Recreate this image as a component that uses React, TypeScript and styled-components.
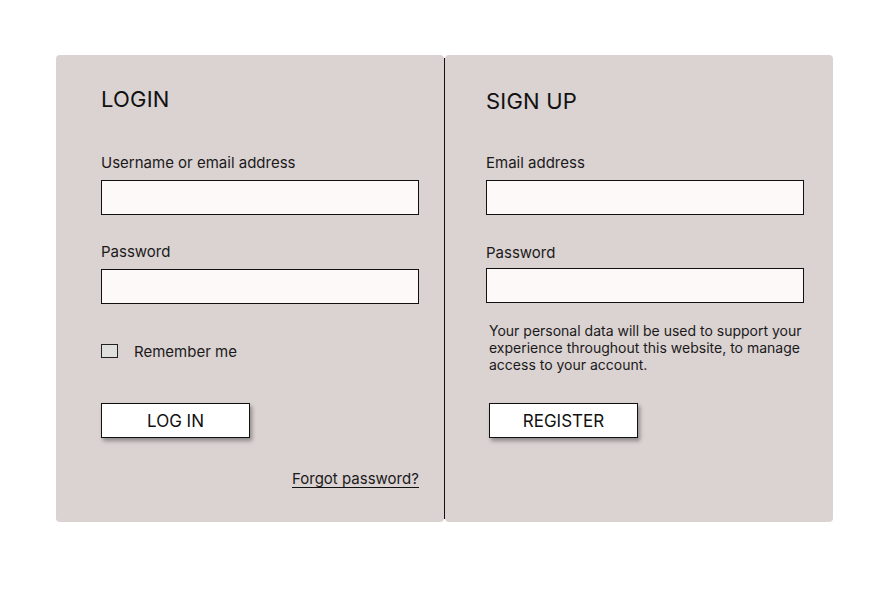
import React from "react";
import styled, { createGlobalStyle } from "styled-components";

const Global = createGlobalStyle`
  html, body { margin: 0; padding: 0; background: #ffffff; }
  body { font-family: Inter, "Noto Sans", sans-serif; color: #111; }
  * { box-sizing: border-box; }
`;

const Page = styled.div`
  padding: 55px 0 0 56px;
`;

const Board = styled.div`
  display: flex;
  width: 777px;
  height: 467px;
`;

const Panel = styled.section<{ $side: "left" | "right" }>`
  flex: 0 0 388px;
  min-width: 0;
  background: #dbd2d2;
  border-radius: 4px;
  padding: ${(p) => (p.$side === "left" ? "30px 25px 0 45px" : "32px 28px 0 41px")};
  display: flex;
  flex-direction: column;
`;

const Divider = styled.div`
  flex: 0 0 1px;
  background: #111;
  margin: 3px 0;
`;

const Title = styled.h2`
  margin: 0;
  font-size: 22px;
  font-weight: 400;
  line-height: 28px;
  letter-spacing: 0.2px;
`;

const Field = styled.div<{ $top: number }>`
  margin-top: ${(p) => p.$top}px;
  display: flex;
  flex-direction: column;
`;

const Label = styled.label<{ $gap?: number }>`
  font-size: 15px;
  line-height: 18px;
  margin-bottom: ${(p) => p.$gap ?? 8}px;
  color: #1a1a1a;
`;

const Input = styled.input`
  width: 318px;
  height: 35px;
  border: 1px solid #111;
  background: #fdf9f9;
  border-radius: 0;
  outline: none;
  padding: 0 8px;
  font: inherit;
`;

const CheckRow = styled.label`
  display: flex;
  align-items: center;
  gap: 16px;
  margin-top: 38px;
  font-size: 15px;
  color: #1a1a1a;
`;

const Box = styled.span`
  width: 17px;
  height: 14px;
  border: 1px solid #222;
  background: #dfe0dd;
  margin-top: -2px;
`;

const Button = styled.button<{ $top: number; $left?: number }>`
  margin-top: ${(p) => p.$top}px;
  margin-left: ${(p) => p.$left ?? 0}px;
  width: 149px;
  height: 35px;
  background: #ffffff;
  border: 1px solid #111;
  box-shadow: 2px 3px 4px rgba(0, 0, 0, 0.35);
  font-family: Inter, "Noto Sans", sans-serif;
  font-size: 17px;
  color: #111;
  padding: 0;
  cursor: pointer;
`;

const Forgot = styled.a`
  align-self: flex-start;
  margin-top: 32px;
  margin-left: 191px;
  font-size: 15px;
  color: #1a1a1a;
  text-decoration: none;
  border-bottom: 1px solid #111;
  line-height: 17px;
`;

const Note = styled.p`
  margin: 19px 0 0 3px;
  width: 316px;
  font-size: 14px;
  line-height: 17px;
  color: #1a1a1a;
`;

export default function App() {
  return (
    <>
      <Global />
      <Page>
        <Board>
          <Panel $side="left">
            <Title>LOGIN</Title>
            <Field $top={41}>
              <Label>Username or email address</Label>
              <Input type="text" />
            </Field>
            <Field $top={28}>
              <Label>Password</Label>
              <Input type="password" />
            </Field>
            <CheckRow>
              <Box />
              Remember me
            </CheckRow>
            <Button $top={42}>LOG IN</Button>
            <Forgot href="#">Forgot password?</Forgot>
          </Panel>
          <Divider />
          <Panel $side="right">
            <Title>SIGN UP</Title>
            <Field $top={39}>
              <Label>Email address</Label>
              <Input type="email" />
            </Field>
            <Field $top={29}>
              <Label $gap={6}>Password</Label>
              <Input type="password" />
            </Field>
            <Note>
              Your personal data will be used to support your experience throughout this website, to manage access to your account.
            </Note>
            <Button $top={30} $left={3}>REGISTER</Button>
          </Panel>
        </Board>
      </Page>
    </>
  );
}
